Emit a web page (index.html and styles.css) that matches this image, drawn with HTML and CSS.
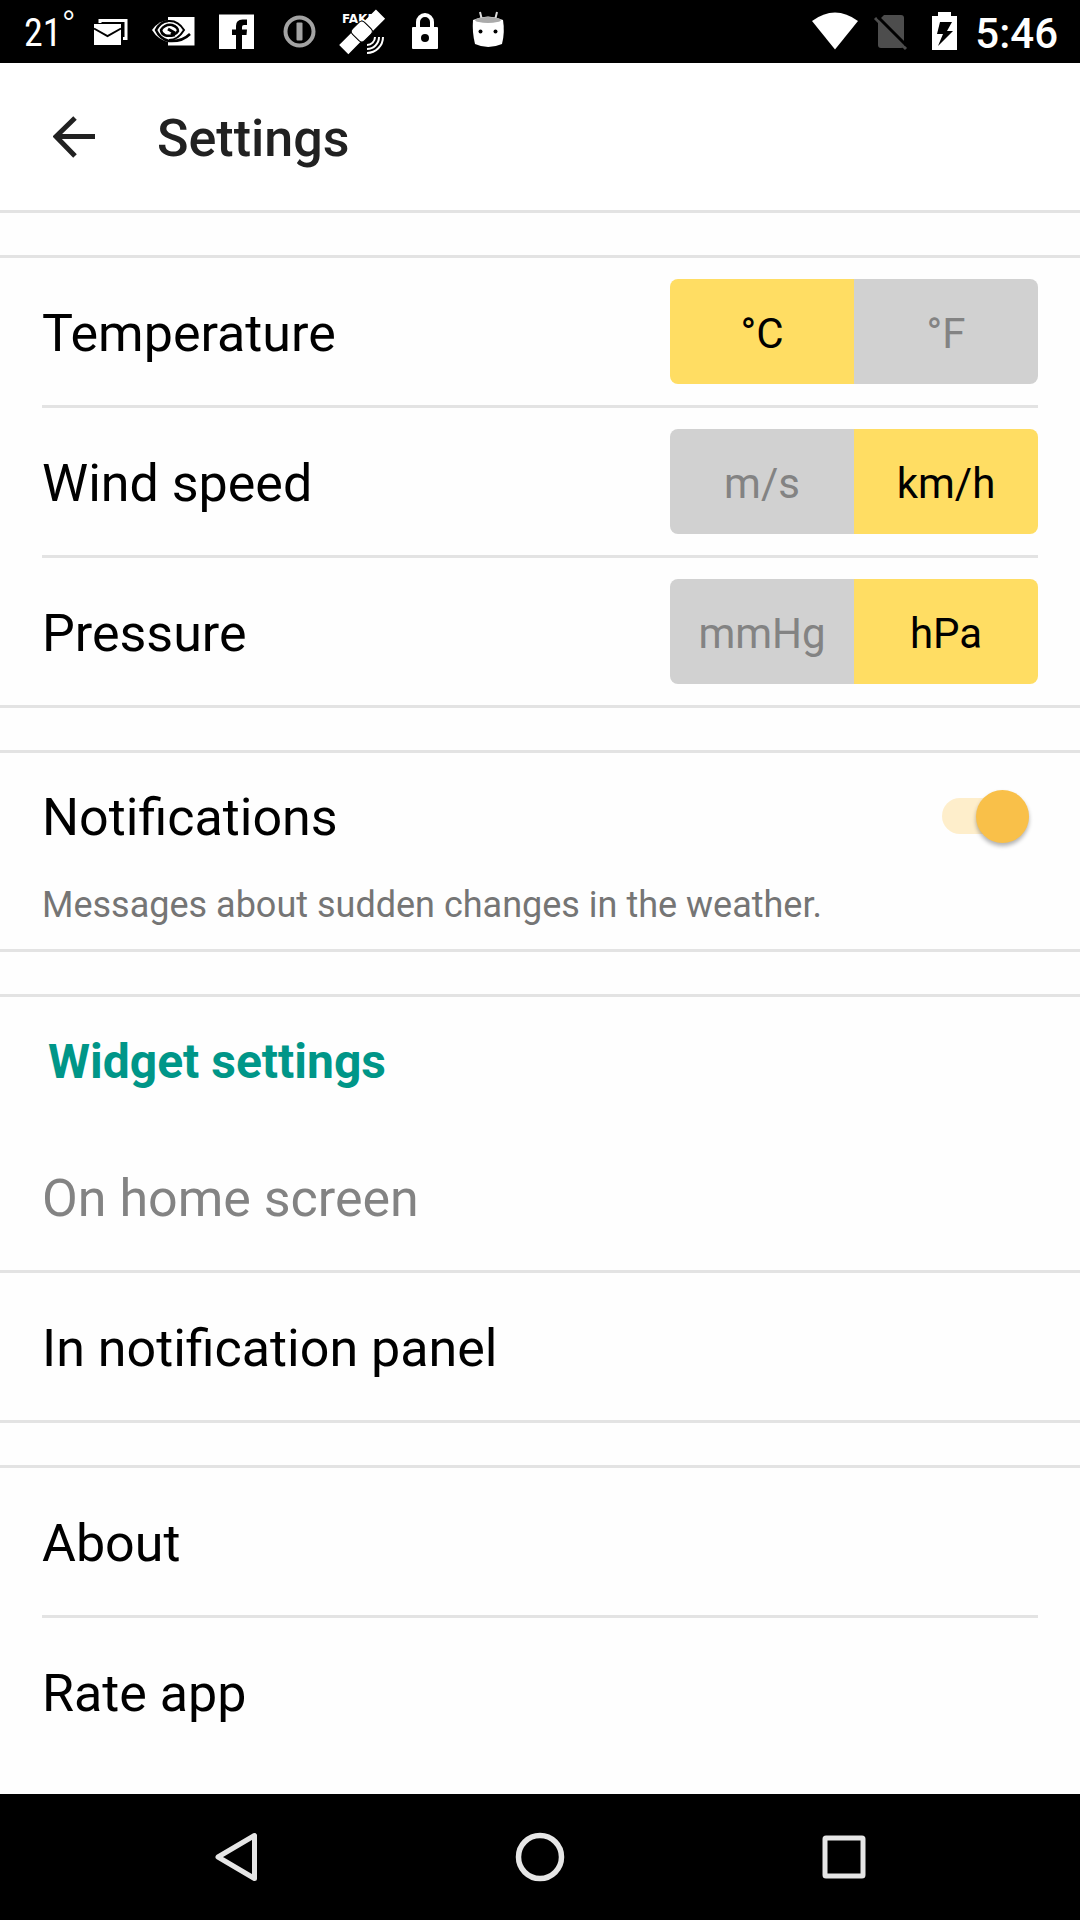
FILE: index.html
```html
<!DOCTYPE html>
<html lang="en">
<head>
<meta charset="utf-8">
<meta name="viewport" content="width=device-width, initial-scale=1">
<title>Settings</title>
<link rel="stylesheet" href="styles.css">
</head>
<body>
<div class="status-bar">
  <div class="status-group">
    <span class="status-temp">21<span class="degree">°</span></span>
    <svg class="status-icon" viewBox="0 0 63 63" aria-hidden="true">
      <path d="M21 23V20.500H47V38.500H44" fill="none" stroke="#fff" stroke-width="3"/>
      <path d="M15 24H42V45H15z" fill="#fff"/>
      <path d="M15 28.500L28.500 36L42 28.500" fill="none" stroke="#000" stroke-width="2"/>
    </svg>
    <svg class="status-icon" viewBox="0 0 63 63" aria-hidden="true">
      <path d="M26 17H52.500V45.500H26z" fill="#fff"/>
      <path d="M10 30Q17 20 28 20Q39 21 44 32Q36 43 27 42Q16 40 10 30z" fill="#fff"/>
      <path d="M26 21Q36 20 42 30Q36 40 27 40" fill="none" stroke="#000" stroke-width="2"/>
      <path d="M26 21Q18 22 14 30Q18 39 27 41Q40 42 48 34" fill="none" stroke="#000" stroke-width="2.500"/>
      <path d="M33 35Q20 38 19 30Q23 24 30 25Q36 27 36 31Q33 36 29 33" fill="none" stroke="#000" stroke-width="2.500"/>
      <path d="M26 29L33 33" stroke="#000" stroke-width="3"/>
    </svg>
    <svg class="status-icon" viewBox="0 0 63 63" aria-hidden="true">
      <path d="M14 14.500H49V49H14z" fill="#fff"/>
      <path d="M31 49V35H27V29.500H31V26Q31 19.500 37.500 19.500H42V25H39Q37 25 37 27V29.500H42L41.500 35H37V49z" fill="#000"/>
    </svg>
    <svg class="status-icon" viewBox="0 0 63 63" aria-hidden="true">
      <circle cx="31.500" cy="31.500" r="14" fill="none" stroke="#a3a3a3" stroke-width="4"/>
      <rect x="28.500" y="22.500" width="6" height="18" rx="1" fill="#a3a3a3"/>
    </svg>
    <svg class="status-icon" viewBox="0 0 63 63" aria-hidden="true">
      <text class="fake-label" x="11" y="23">FAKE</text>
      <g transform="translate(31.500 31.500) rotate(-45)">
        <path d="M-26 -7H-9V6H-26zM8 -6H25V7H8z" fill="#fff"/>
        <rect x="-9" y="-9" width="17" height="17" rx="4" fill="#fff" stroke="#000" stroke-width="1"/>
      </g>
      <path d="M36 45A8 8 0 0 0 44 37M36 49A12 12 0 0 0 48 37M36 53A16 16 0 0 0 52 37" fill="none" stroke="#fff" stroke-width="2"/>
    </svg>
    <svg class="status-icon" viewBox="0 0 63 63" aria-hidden="true">
      <path d="M24 29V22A7 7 0 0 1 38 22V29" fill="none" stroke="#fff" stroke-width="4"/>
      <rect x="18" y="27" width="26" height="22" rx="1" fill="#fff"/>
      <circle cx="31" cy="38" r="4" fill="#000"/>
    </svg>
    <svg class="status-icon" viewBox="0 0 63 63" aria-hidden="true">
      <path d="M23 12L25 20M40 12L38 20" stroke="#ddd" stroke-width="2"/>
      <path d="M16 20Q31 13 46 20Q48 32 45 44Q31 50 18 44Q15 32 16 20z" fill="#fff"/>
      <ellipse cx="31" cy="20" rx="13" ry="3" fill="#aaa"/>
      <circle cx="23.500" cy="31.500" r="2" fill="#000"/>
      <circle cx="38.500" cy="31.500" r="2" fill="#000"/>
    </svg>
  </div>
  <div class="status-group">
    <svg class="status-icon" viewBox="0 0 63 63" aria-hidden="true">
      <path d="M8 21Q31 4 54 21L31 49.500z" fill="#fff"/>
    </svg>
    <svg class="status-icon status-icon-narrow" viewBox="0 0 50 63" aria-hidden="true">
      <path d="M17 15H34Q37 15 37 18V45Q37 48 34 48H14Q11 48 11 45V21z" fill="#4d4d4d"/>
      <path d="M8 18L39 49" stroke="#4d4d4d" stroke-width="3"/>
      <path d="M11 17L39 45" stroke="#000" stroke-width="3"/>
    </svg>
    <svg class="status-icon status-icon-narrow" viewBox="0 0 50 63" aria-hidden="true">
      <path d="M21 12H34V16H40V50H15V16H21z" fill="#fff"/>
      <path d="M23 22H35L30 31H36L21 46L26 34H20z" fill="#000"/>
    </svg>
    <span class="clock">5:46</span>
  </div>
</div>

<header class="app-bar">
  <button class="back-button" type="button" aria-label="Back">
    <svg viewBox="0 0 42 42" width="42" height="42" aria-hidden="true">
      <path d="M42 20.500H3M22 2L3 20.500L22 40" fill="none" stroke="#212121" stroke-width="5"/>
    </svg>
  </button>
  <h1 class="title">Settings</h1>
</header>

<main class="content">
  <section class="group">
    <div class="row" role="radiogroup" aria-labelledby="temperature-label">
      <span class="row-label" id="temperature-label">Temperature</span>
      <div class="segmented">
        <label class="segment"><input type="radio" name="temperature" checked><span>°C</span></label>
        <label class="segment"><input type="radio" name="temperature"><span>°F</span></label>
      </div>
    </div>
    <div class="row" role="radiogroup" aria-labelledby="wind-label">
      <span class="row-label" id="wind-label">Wind speed</span>
      <div class="segmented">
        <label class="segment"><input type="radio" name="wind"><span>m/s</span></label>
        <label class="segment"><input type="radio" name="wind" checked><span>km/h</span></label>
      </div>
    </div>
    <div class="row" role="radiogroup" aria-labelledby="pressure-label">
      <span class="row-label" id="pressure-label">Pressure</span>
      <div class="segmented">
        <label class="segment"><input type="radio" name="pressure"><span>mmHg</span></label>
        <label class="segment"><input type="radio" name="pressure" checked><span>hPa</span></label>
      </div>
    </div>
  </section>

  <section class="group">
    <div class="row row-short">
      <label class="row-label" for="notifications">Notifications</label>
      <input class="switch" id="notifications" type="checkbox" role="switch" checked>
    </div>
    <p class="hint">Messages about sudden changes in the weather.</p>
  </section>

  <section class="group group-wide">
    <h2 class="group-title">Widget settings</h2>
    <button class="row" type="button" disabled><span class="row-label">On home screen</span></button>
    <button class="row" type="button"><span class="row-label">In notification panel</span></button>
  </section>

  <section class="group group-last">
    <button class="row" type="button"><span class="row-label">About</span></button>
    <button class="row" type="button"><span class="row-label">Rate app</span></button>
  </section>
</main>

<nav class="nav-bar" aria-label="System">
  <button class="nav-button" type="button" aria-label="Back">
    <svg viewBox="0 0 50 50" width="50" height="50"><path d="M43.500 3.500V46.500L7 25z" fill="none" stroke="#e6e6e6" stroke-width="5" stroke-linejoin="round"/></svg>
  </button>
  <button class="nav-button" type="button" aria-label="Home">
    <svg viewBox="0 0 50 50" width="50" height="50"><circle cx="25" cy="25" r="21.500" fill="none" stroke="#e6e6e6" stroke-width="5.500"/></svg>
  </button>
  <button class="nav-button" type="button" aria-label="Recent apps">
    <svg viewBox="0 0 50 50" width="50" height="50"><rect x="6" y="6" width="38" height="38" rx="1" fill="none" stroke="#e6e6e6" stroke-width="5"/></svg>
  </button>
</nav>
</body>
</html>
```
FILE: styles.css
```css
* {
  box-sizing: border-box;
}

body {
  display: flex;
  flex-direction: column;
  min-height: 100vh;
  margin: 0;
  background: #fefefe;
  color: #000;
  font-family: Roboto, "Liberation Sans", sans-serif;
}

button {
  border: 0;
  background: none;
  color: inherit;
  font-family: inherit;
}

.status-bar {
  display: flex;
  justify-content: space-between;
  height: 63px;
  padding: 0 22px 0 24px;
  background: #000;
  color: #fff;
}

.status-group {
  display: flex;
  align-items: center;
}

.status-temp {
  display: flex;
  width: 55px;
  padding-top: 2px;
  font-family: "Roboto Condensed", Roboto, sans-serif;
  font-size: 38px;
  line-height: 42px;
  font-weight: 400;
  white-space: nowrap;
}

.degree {
  font-weight: 300;
  line-height: 28px;
}

.status-icon {
  width: 63px;
  height: 63px;
}

.status-icon-narrow {
  width: 50px;
}

.fake-label {
  fill: #fff;
  font: bold 12px "DejaVu Sans", sans-serif;
}

.clock {
  padding: 4px 0 0 8px;
  font-size: 42px;
  line-height: 48px;
  font-weight: 500;
}

.app-bar {
  display: flex;
  align-items: center;
  gap: 62px;
  height: 150px;
  padding: 0 42px 0 53px;
  border-bottom: 3px solid #e3e3e3;
  background: #fff;
}

.back-button {
  display: flex;
  padding: 0;
}

.title {
  margin: 0;
  padding-top: 4px;
  color: #212121;
  font-size: 52px;
  line-height: 60px;
  font-weight: 500;
}

.content {
  flex: 1;
  padding-bottom: 29px;
}

.group {
  margin-top: 42px;
  padding: 0 42px;
  border: solid #e3e3e3;
  border-width: 3px 0;
}

.group-last {
  border-bottom: 0;
}

.row {
  display: flex;
  align-items: center;
  justify-content: space-between;
  width: 100%;
  min-height: 150px;
  padding: 0;
  border-bottom: 3px solid #e3e3e3;
  text-align: left;
}

.row:last-child {
  min-height: 147px;
  border-bottom: 0;
}

.row-short {
  min-height: 126px;
  border-bottom: 0;
}

.row-label {
  padding-top: 4px;
  font-size: 52px;
  line-height: 60px;
}

.row:disabled {
  color: #838383;
}

.group-wide {
  padding: 0;
}

.group-wide .row {
  padding: 0 42px;
}

.group-title {
  margin: 0;
  padding: 35px 48px 31px;
  color: #009688;
  font-size: 48px;
  line-height: 60px;
  font-weight: 700;
}

.segmented {
  display: flex;
  width: 368px;
  height: 105px;
  overflow: hidden;
  border-radius: 8px;
}

.segment {
  position: relative;
  display: flex;
  flex: 1;
}

.segment input {
  position: absolute;
  inset: 0;
  margin: 0;
  opacity: 0;
}

.segment span {
  display: flex;
  flex: 1;
  align-items: center;
  justify-content: center;
  padding-top: 4px;
  background: #d1d1d1;
  color: #838383;
  font-size: 42px;
  line-height: 48px;
}

.segment input:checked + span {
  background: #ffdd63;
  color: #000;
}

.switch {
  display: flex;
  align-items: center;
  justify-content: flex-end;
  width: 87px;
  height: 36px;
  margin: 0 9px 0 0;
  border-radius: 18px;
  background: #feeecb;
  appearance: none;
}

.switch::before {
  flex: none;
  width: 53px;
  height: 53px;
  border-radius: 50%;
  background: #f9c049;
  box-shadow: 0 3px 4px rgba(0, 0, 0, 0.3);
  content: "";
}

.hint {
  margin: 0;
  padding: 5px 0 23px;
  color: #757575;
  font-size: 36px;
  line-height: 42px;
}

.nav-bar {
  display: grid;
  grid-template-columns: repeat(3, 1fr);
  height: 126px;
  padding: 0 84px;
  background: #000;
}

.nav-button {
  display: flex;
  align-items: center;
  justify-content: center;
  padding: 0;
}
```
